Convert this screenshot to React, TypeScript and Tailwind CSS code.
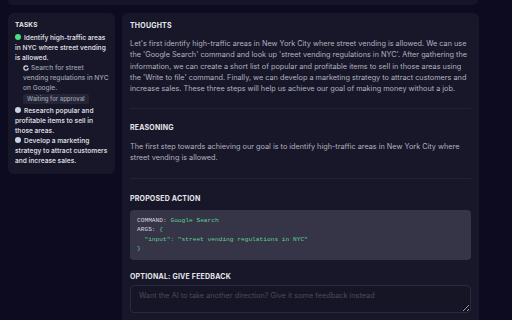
import React from "react";

function Spinner() {
  return (
    <svg width="6" height="6" viewBox="0 0 24 24" className="inline-block mr-[2px] -mt-[1px] align-middle" fill="none" stroke="#d1d5db" strokeWidth="5">
      <circle cx="12" cy="12" r="8.5" strokeDasharray="44 9" />
    </svg>
  );
}

function Dot({ color }: { color: string }) {
  return <span className={`inline-block w-[6px] h-[6px] rounded-full mr-[3px] align-middle -mt-[2px] ${color}`} />;
}

export default function App() {
  return (
    <div className="w-[512px] h-[320px] overflow-hidden bg-[#0d0b1f] font-['Inter',sans-serif]">
      <div className="ml-[8px] w-[470px] h-[5px] rounded-b-[6px] bg-[#161527]" />
      <div className="flex gap-[7px] px-[8px] pt-[8px] items-start">
        <div className="w-[107px] shrink-0 rounded-[6px] bg-[#181729] pl-[7px] pr-[4px] pt-[7px] pb-[8px]">
          <div className="text-[6.5px] leading-[10px] font-bold text-[#e5e7eb] tracking-[0.2px]">TASKS</div>
          <div className="mt-[3px] text-[6.6px] leading-[10px] font-semibold text-[#d4d6de] whitespace-nowrap">
            <div>
              <Dot color="bg-[#4ade80]" />
              Identify high-traffic areas
              <br />
              in NYC where street vending
              <br />
              is allowed.
            </div>
            <div className="pl-[8px] font-medium text-[#9ca3af]">
              <Spinner />
              Search for street
              <br />
              vending regulations in NYC
              <br />
              on Google.
            </div>
            <div className="pl-[8px] mt-[1px] mb-[2px]">
              <span className="inline-block rounded-[2px] bg-[#262538] px-[4px] text-[6px] leading-[10px] font-medium text-[#9ca3af]">
                Waiting for approval
              </span>
            </div>
            <div>
              <Dot color="bg-[#cbd5e1]" />
              Research popular and
              <br />
              profitable items to sell in
              <br />
              those areas.
            </div>
            <div>
              <Dot color="bg-[#cbd5e1]" />
              Develop a marketing
              <br />
              strategy to attract customers
              <br />
              and increase sales.
            </div>
          </div>
        </div>
        <div className="w-[357px] shrink-0 h-[320px] rounded-t-[6px] bg-[#181729] px-[8px] pt-[8px]">
          <div className="text-[7px] leading-[10px] font-bold text-[#e5e7eb] tracking-[0.2px]">THOUGHTS</div>
          <p className="mt-[7px] text-[7.3px] leading-[11.3px] text-[#b0b2bf]">
            Let's first identify high-traffic areas in New York City where street vending is allowed. We can use the 'Google Search' command and look up 'street vending regulations in NYC'. After gathering the information, we can create a short list of popular and profitable items to sell in those areas using the 'Write to file' command. Finally, we can develop a marketing strategy to attract customers and increase sales. These three steps will help us achieve our goal of making money without a job.
          </p>
          <div className="mt-[13.5px] h-px bg-[#232236]" />
          <div className="mt-[14px] text-[7px] leading-[10px] font-bold text-[#e5e7eb] tracking-[0.2px]">REASONING</div>
          <p className="mt-[8px] text-[7.3px] leading-[11.3px] text-[#b0b2bf]">
            The first step towards achieving our goal is to identify high-traffic areas in New York City where street vending is allowed.
          </p>
          <div className="mt-[14px] h-px bg-[#232236]" />
          <div className="mt-[15px] text-[7px] leading-[10px] font-bold text-[#e5e7eb] tracking-[0.2px]">PROPOSED ACTION</div>
          <div className="mt-[6px] rounded-[4px] bg-[#363447] px-[7px] pt-[6.5px] pb-[7px] font-['Liberation_Mono',monospace] text-[6.2px] leading-[9.3px] whitespace-pre">
            <div><span className="text-[#d1d5db]">COMMAND: </span><span className="text-[#5fd08b]">Google Search</span></div>
            <div><span className="text-[#d1d5db]">ARGS: </span><span className="text-[#5fd08b]">{"{"}</span></div>
            <div className="text-[#5fd08b]">{'  "input": "street vending regulations in NYC"'}</div>
            <div className="text-[#5fd08b]">{"}"}</div>
          </div>
          <div className="mt-[12px] text-[7px] leading-[10px] font-bold text-[#e5e7eb] tracking-[0.2px]">OPTIONAL: GIVE FEEDBACK</div>
          <textarea
            className="mt-[3px] block w-full h-[28px] rounded-[4px] border border-[#2a2940] bg-[#161526] px-[8px] py-[4px] text-[7.3px] leading-[11px] text-[#d1d5db] placeholder:text-[#4b4b5e] outline-none"
            placeholder="Want the AI to take another direction? Give it some feedback instead"
          />
        </div>
      </div>
    </div>
  );
}
